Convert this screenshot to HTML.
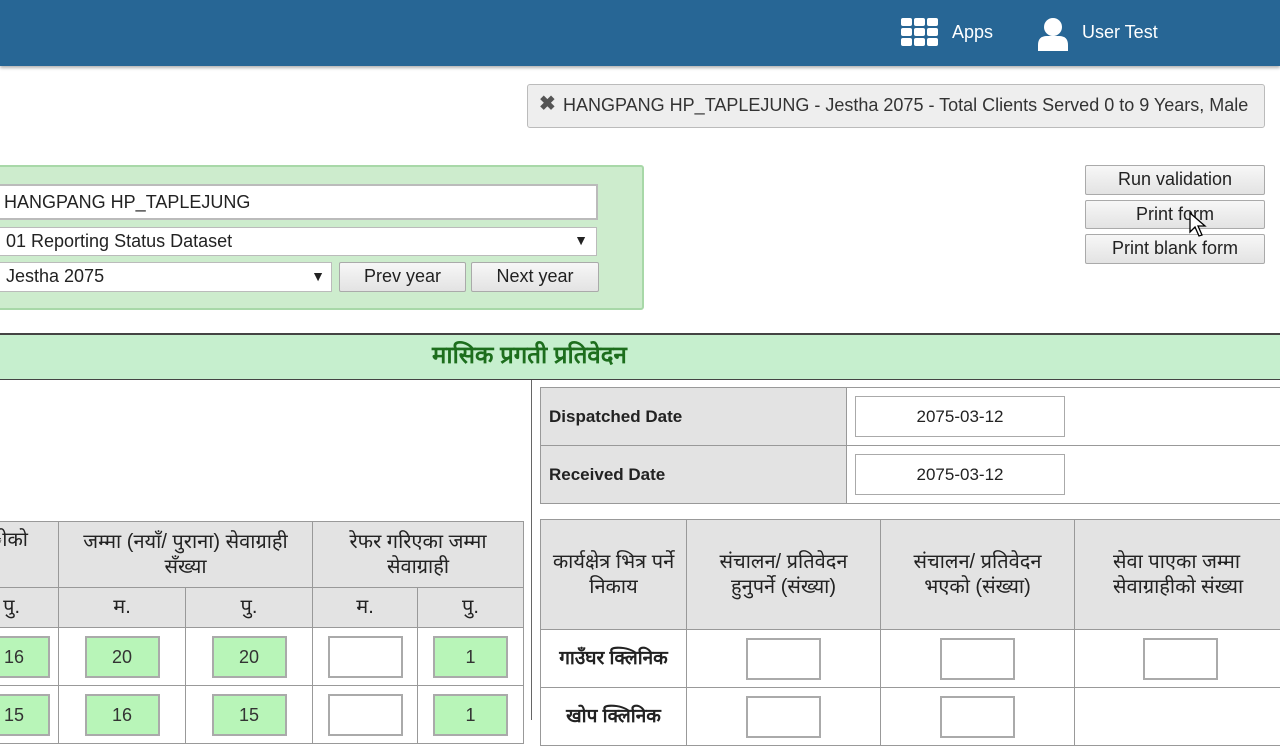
<!DOCTYPE html><html><head><meta charset="utf-8"><style>
*{box-sizing:border-box;margin:0;padding:0}
body{width:1280px;height:720px;overflow:hidden;background:#fff;font-family:"Liberation Sans",sans-serif;position:relative;color:#222}
.a{position:absolute}
.hdr{left:0;top:0;width:1280px;height:66px;background:#276695;box-shadow:0 2px 3px rgba(0,0,0,.3)}
.btn{position:absolute;background:linear-gradient(#f7f7f7,#e3e3e3);border:1px solid #aaa;border-radius:2px;font-size:18px;text-align:center;color:#222}
.inp{position:absolute;background:#fff;border:1px solid #bbb;font-size:18px;padding-left:5px}
table{border-collapse:collapse;position:absolute;font-family:"Liberation Sans","DejaVu Sans",sans-serif;table-layout:fixed}
td{border:1px solid #999;text-align:center;font-size:20px;white-space:nowrap;overflow:hidden;line-height:25px;color:#222}
.h{background:#e3e3e3}
.g{display:inline-block;width:75px;height:42px;background:#b8f5b8;border:2px solid #aaa;line-height:38px;font-size:18px;color:#333;vertical-align:middle}
.w{display:inline-block;width:75px;height:42px;background:#fff;border:2px solid #aaa;vertical-align:middle}
</style></head><body>
<div class="a hdr">
<svg class="a" style="left:901px;top:18px" width="38" height="30"><g fill="#fff"><rect x="0" y="0" width="11" height="8" rx="2"/><rect x="13" y="0" width="11" height="8" rx="2"/><rect x="26" y="0" width="11" height="8" rx="2"/><rect x="0" y="10" width="11" height="8" rx="2"/><rect x="13" y="10" width="11" height="8" rx="2"/><rect x="26" y="10" width="11" height="8" rx="2"/><rect x="0" y="20" width="11" height="8" rx="2"/><rect x="13" y="20" width="11" height="8" rx="2"/><rect x="26" y="20" width="11" height="8" rx="2"/></g></svg>
<div class="a" style="left:952px;top:22px;color:#fff;font-size:18px">Apps</div>
<svg class="a" style="left:1037px;top:17px" width="32" height="34"><circle cx="16" cy="10" r="9" fill="#fff"/><path d="M1 34 V28 Q1 19 10 19 H22 Q31 19 31 28 V34 Z" fill="#fff"/></svg>
<div class="a" style="left:1082px;top:22px;color:#fff;font-size:18px">User Test</div>
</div>
<div class="a" style="left:527px;top:84px;width:738px;height:44px;background:#eee;border:1px solid #bbb;border-radius:3px;font-size:18px;padding:10px 0 0 35px;color:#333;white-space:nowrap">HANGPANG HP_TAPLEJUNG - Jestha 2075 - Total Clients Served 0 to 9 Years, Male</div>
<div class="a" style="left:539px;top:91px;font-size:20px;color:#555;font-weight:bold">✖</div>
<div class="a" style="left:-5px;top:165px;width:649px;height:145px;background:#cdeccd;border:2px solid #a8d8a8;border-radius:3px"></div>
<div class="inp" style="left:-3px;top:184px;width:601px;height:36px;padding-top:6px;border:2px solid #bbb">HANGPANG HP_TAPLEJUNG</div>
<div class="inp" style="left:-3px;top:227px;width:600px;height:29px;padding-top:3px;padding-left:8px">01 Reporting Status Dataset<span class="a" style="right:8px;top:4px;font-size:14px">▼</span></div>
<div class="inp" style="left:-3px;top:262px;width:335px;height:30px;padding-top:3px;padding-left:8px">Jestha 2075<span class="a" style="right:6px;top:5px;font-size:14px">▼</span></div>
<div class="btn" style="left:339px;top:262px;width:127px;height:30px;padding-top:3px">Prev year</div>
<div class="btn" style="left:471px;top:262px;width:128px;height:30px;padding-top:3px">Next year</div>
<div class="btn" style="left:1085px;top:165px;width:180px;height:30px;padding-top:3px">Run validation</div>
<div class="btn" style="left:1085px;top:200px;width:180px;height:29px;padding-top:3px">Print form</div>
<div class="btn" style="left:1085px;top:234px;width:180px;height:30px;padding-top:3px">Print blank form</div>
<svg class="a" style="left:1189px;top:212px" width="20" height="28"><path d="M1 1 L1 20 L6 15 L10 24 L13 23 L9 14 L16 14 Z" fill="#fff" stroke="#000" stroke-width="1.3"/></svg>
<div class="a" style="left:0;top:333px;width:1280px;height:47px;background:#c6efce;border-top:2px solid #444;border-bottom:1px solid #444;font-size:24px;font-weight:bold;color:#1d6e1d;line-height:42px;font-family:'Liberation Sans','DejaVu Sans',sans-serif"><span style="position:absolute;left:432px">मासिक प्रगती प्रतिवेदन</span></div>
<div class="a" style="left:531px;top:380px;width:1px;height:340px;background:#666"></div>
<table style="left:540px;top:387px;width:760px">
<tr style="height:58px"><td class="h" style="width:306px;text-align:left;padding-left:8px;font-weight:bold;font-size:17px">Dispatched Date</td><td style="text-align:left;padding-left:8px"><div style="width:210px;height:41px;border:1px solid #aaa;line-height:39px;font-size:17px;text-align:center">2075-03-12</div></td></tr>
<tr style="height:58px"><td class="h" style="text-align:left;padding-left:8px;font-weight:bold;font-size:17px">Received Date</td><td style="text-align:left;padding-left:8px"><div style="width:210px;height:41px;border:1px solid #aaa;line-height:39px;font-size:17px;text-align:center">2075-03-12</div></td></tr>
</table>
<table style="left:-60px;top:521px;width:584px">
<col style="width:118px"><col style="width:127px"><col style="width:127px"><col style="width:105px"><col style="width:106px">
<tr style="height:66px"><td class="h" style="text-align:right;padding-right:30px;vertical-align:top;padding-top:6px">ीको</td><td class="h" colspan="2">जम्मा (नयाँ/ पुराना) सेवाग्राही<br>सँख्या</td><td class="h" colspan="2">रेफर गरिएका जम्मा<br>सेवाग्राही</td></tr>
<tr style="height:40px"><td class="h" style="text-align:right;padding-right:38px">पु.</td><td class="h">म.</td><td class="h">पु.</td><td class="h">म.</td><td class="h">पु.</td></tr>
<tr style="height:58px"><td style="text-align:right;padding-right:8px"><span class="g" style="text-align:left;padding-left:27px">16</span></td><td><span class="g">20</span></td><td><span class="g">20</span></td><td><span class="w"></span></td><td><span class="g">1</span></td></tr>
<tr style="height:58px"><td style="text-align:right;padding-right:8px"><span class="g" style="text-align:left;padding-left:27px">15</span></td><td><span class="g">16</span></td><td><span class="g">15</span></td><td><span class="w"></span></td><td><span class="g">1</span></td></tr>
</table>
<table style="left:540px;top:519px;width:760px">
<col style="width:146px"><col style="width:194px"><col style="width:194px"><col>
<tr style="height:110px"><td class="h">कार्यक्षेत्र भित्र पर्ने<br>निकाय</td><td class="h">संचालन/ प्रतिवेदन<br>हुनुपर्ने (संख्या)</td><td class="h">संचालन/ प्रतिवेदन<br>भएको (संख्या)</td><td class="h" style="text-align:left;padding-left:38px">सेवा पाएका जम्मा<br>सेवाग्राहीको संख्या</td></tr>
<tr style="height:58px"><td style="font-weight:bold;font-size:19px">गाउँघर क्लिनिक</td><td><span class="w"></span></td><td><span class="w"></span></td><td style="text-align:left;padding-left:68px"><span class="w"></span></td></tr>
<tr style="height:58px"><td style="font-weight:bold;font-size:19px">खोप क्लिनिक</td><td><span class="w"></span></td><td><span class="w"></span></td><td></td></tr>
</table>
</body></html>
